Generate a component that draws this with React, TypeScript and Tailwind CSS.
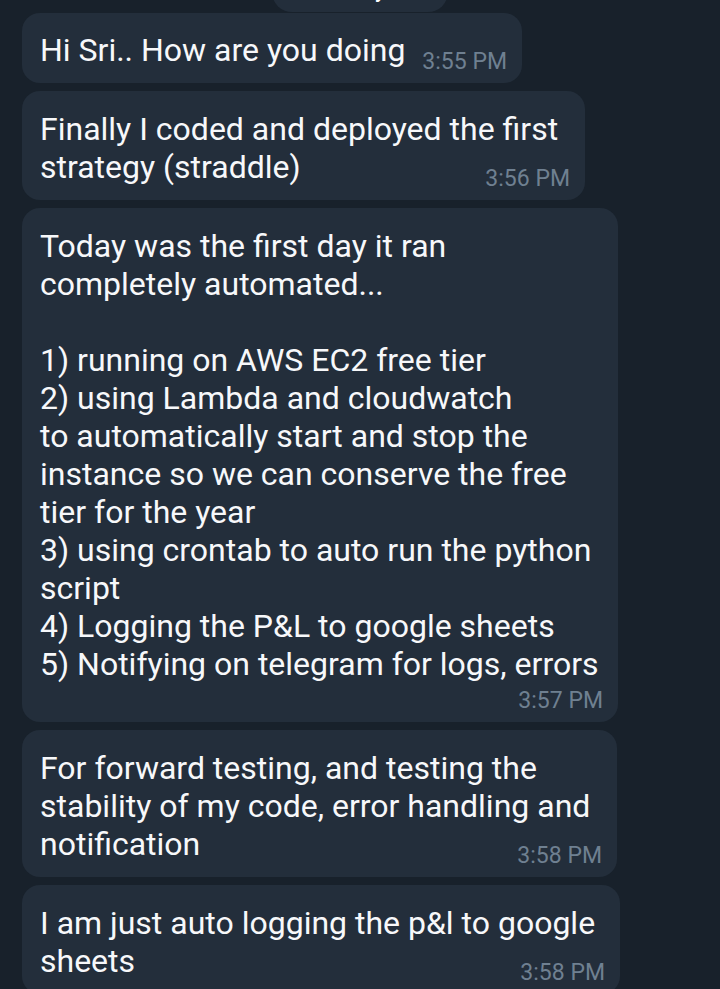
import React from "react";

interface BubbleProps {
  lines: string[];
  time: string;
  width: string;
  mode: "inline" | "overlap" | "below";
}

const Bubble: React.FC<BubbleProps> = ({ lines, time, width, mode }) => {
  const timeEl = (
    <span className="text-[23px] leading-[28px] text-[#6f8091] whitespace-nowrap">
      {time}
    </span>
  );

  if (mode === "inline") {
    return (
      <div className={`${width} bg-[#232e3b] rounded-[18px] pl-[18px] pr-[15px] pt-[18px] pb-[7px] flex items-end justify-between`}>
        <span className="text-[32px] leading-[38px] text-[#f7f8fa] whitespace-nowrap mb-[7px]">
          {lines[0]}
        </span>
        {timeEl}
      </div>
    );
  }

  return (
    <div className={`${width} bg-[#232e3b] rounded-[18px] pl-[18px] pr-[15px] pt-[19px] pb-[7px] flex flex-col`}>
      <div className="text-[32px] leading-[38px] text-[#f7f8fa]">
        {lines.map((l, i) => (
          <div key={i} className="whitespace-nowrap min-h-[38px]">
            {l}
          </div>
        ))}
      </div>
      <div className={`self-end ${mode === "overlap" ? "-mt-[21px]" : "mt-[4px]"}`}>
        {timeEl}
      </div>
    </div>
  );
};

export default function App() {
  return (
    <div
      className="w-[720px] h-[989px] overflow-hidden bg-[#18212b]"
      style={{ fontFamily: "Roboto, 'Noto Sans', sans-serif" }}
    >
      <div className="flex flex-col">
        <div className="flex justify-center -mt-[28px]">
          <div className="w-[176px] h-[40px] rounded-full bg-[#232e3b] text-[24px] leading-[34px] text-white text-center">
            January 29
          </div>
        </div>
        <div className="flex flex-col gap-[8px] pl-[22px] pt-[1px]">
          <Bubble mode="inline" width="w-[500px]" time="3:55 PM" lines={["Hi Sri.. How are you doing"]} />
          <Bubble
            mode="overlap"
            width="w-[563px]"
            time="3:56 PM"
            lines={["Finally I coded and deployed the first", "strategy (straddle)"]}
          />
          <Bubble
            mode="below"
            width="w-[596px]"
            time="3:57 PM"
            lines={[
              "Today was the first day it ran",
              "completely automated...",
              "",
              "1) running on AWS EC2 free tier",
              "2) using Lambda and cloudwatch",
              "to automatically start and stop the",
              "instance so we can conserve the free",
              "tier for the year",
              "3) using crontab to auto run the python",
              "script",
              "4) Logging the P&L to google sheets",
              "5) Notifying on telegram for logs, errors",
            ]}
          />
          <Bubble
            mode="overlap"
            width="w-[595px]"
            time="3:58 PM"
            lines={[
              "For forward testing, and testing the",
              "stability of my code, error handling and",
              "notification",
            ]}
          />
          <Bubble
            mode="overlap"
            width="w-[598px]"
            time="3:58 PM"
            lines={["I am just auto logging the p&l to google", "sheets"]}
          />
        </div>
      </div>
    </div>
  );
}
